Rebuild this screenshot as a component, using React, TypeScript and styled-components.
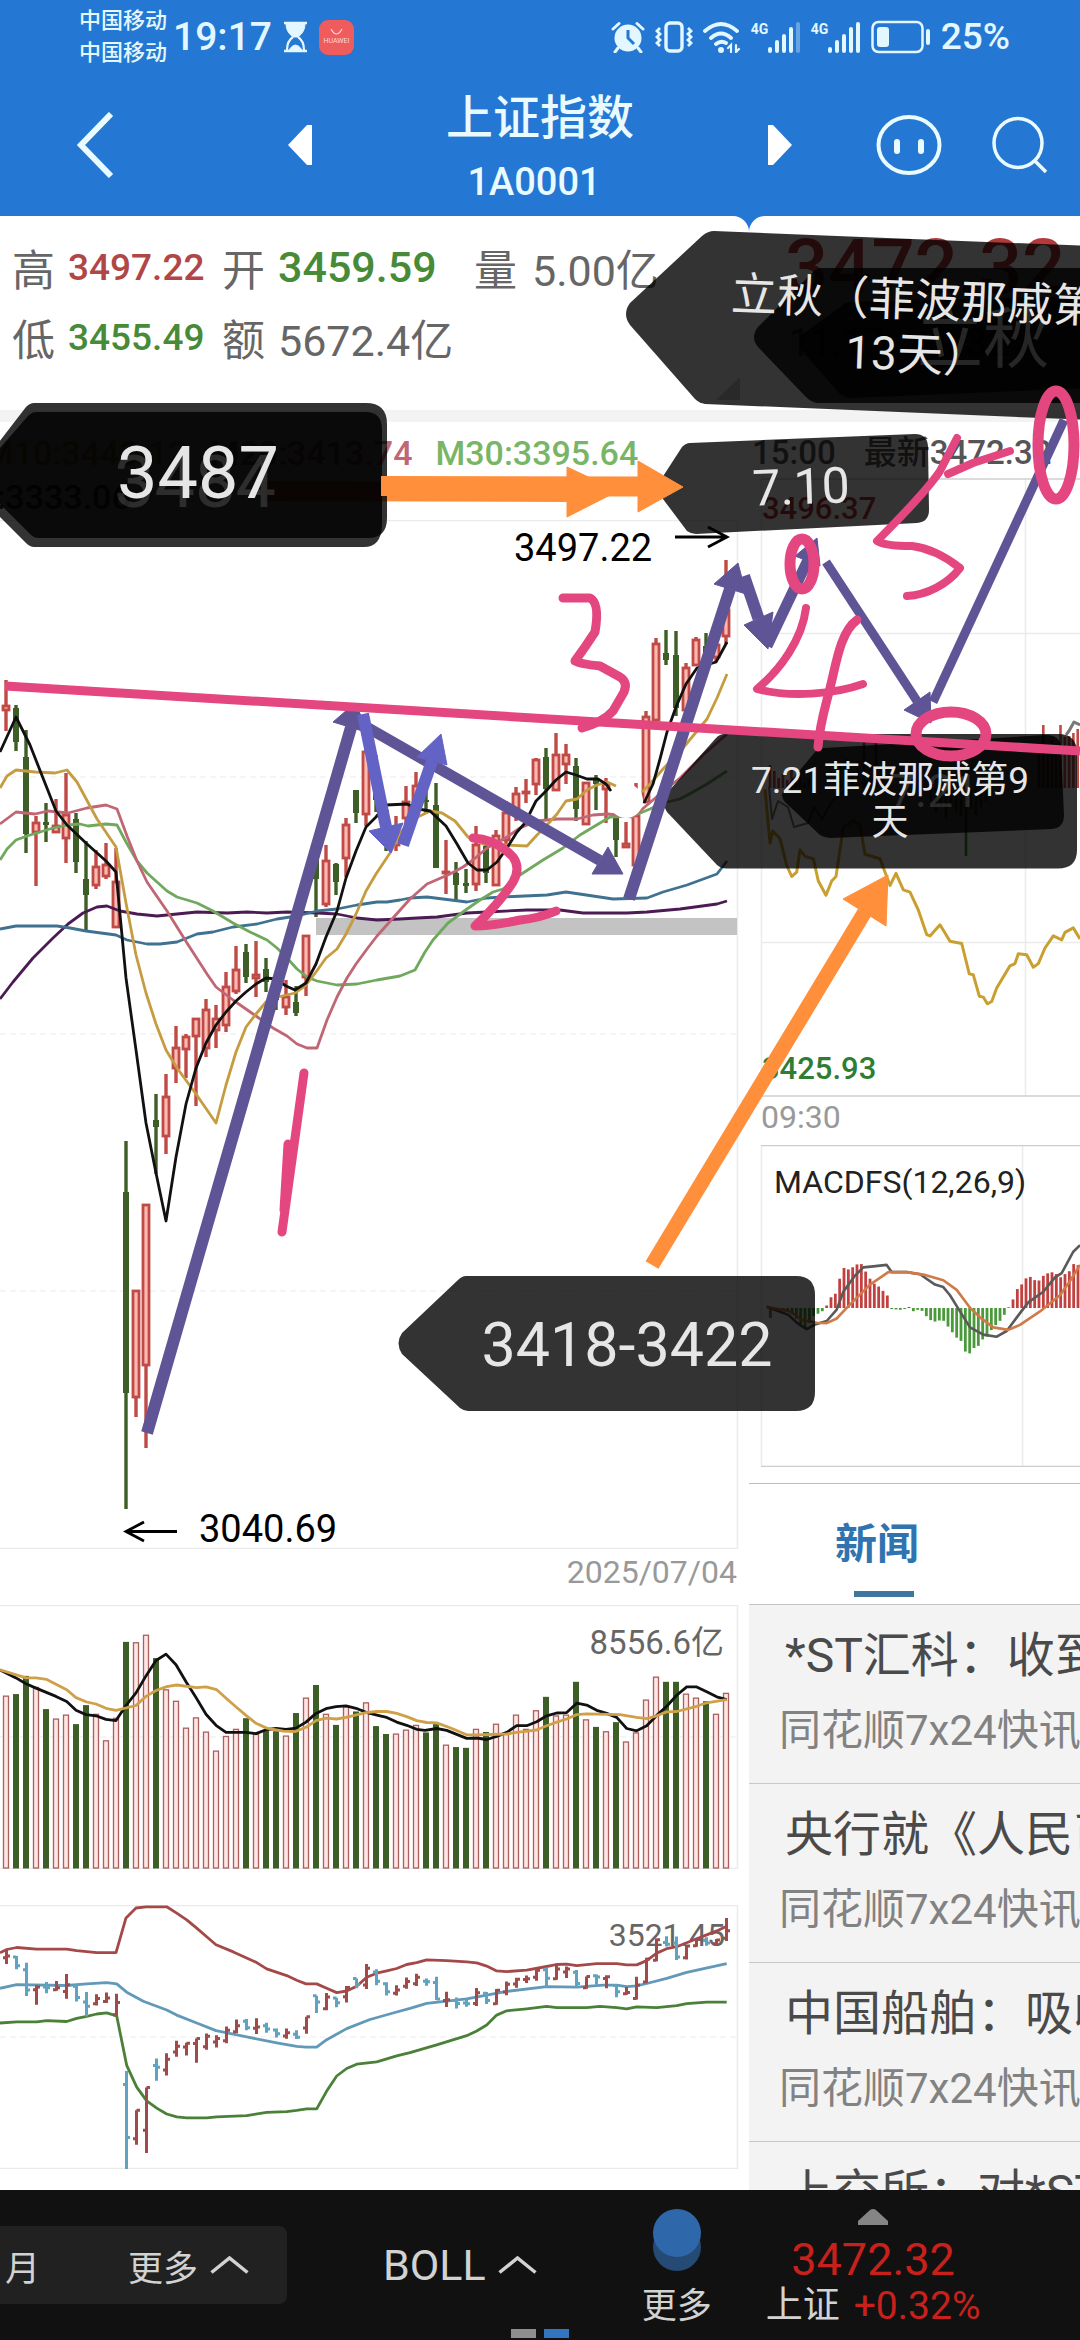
import React from 'react';
import styled, { createGlobalStyle } from 'styled-components';

const FONT = "Roboto, 'Noto Sans CJK SC', sans-serif";
const UP = '#bf4a46';
const DOWN = '#3d5e26';
const RULE = '#ebebeb';

const GlobalStyle = createGlobalStyle`
  *, *::before, *::after { box-sizing: border-box; }
  html, body { margin: 0; background: #fff; }
  body { font-family: ${FONT}; overflow: hidden; }
  button { border: 0; padding: 0; margin: 0; background: none; color: inherit; font: inherit; cursor: pointer; }
  svg { display: block; flex: none; }
`;

/* ---------- page frame ---------- */

const Page = styled.div`
  position: relative;
  display: flex;
  flex-direction: column;
  height: 100vh;
  overflow: hidden;
  background: #2577d4;
`;

const StatusBar = styled.div`
  display: flex;
  align-items: center;
  justify-content: space-between;
  height: 74px;
  padding: 0 70px 0 79px;
  color: #e2f7ff;
`;

const StatusGroup = styled.div<{ $gap: number }>`
  display: flex;
  align-items: center;
  gap: ${(p) => p.$gap}px;
`;

const Carriers = styled.div`
  font-size: 22px;
  line-height: 32px;
  font-weight: 500;
  white-space: nowrap;
`;

const StatusText = styled.span<{ $size: number }>`
  font-size: ${(p) => p.$size}px;
  line-height: 48px;
  font-weight: 500;
`;

const AppBadge = styled.span`
  display: flex;
  flex-direction: column;
  align-items: center;
  justify-content: center;
  width: 35px;
  height: 35px;
  border-radius: 9px;
  background: #ee5c5e;
  color: #ffd9d9;
  font-size: 7px;
  line-height: 10px;
`;

const Signal = styled.span`
  display: flex;
  align-items: flex-start;
  line-height: 16px;
  width: 50px;
  justify-content: space-between;
  b { font-size: 14px; font-weight: 700; }
`;

const Toolbar = styled.header`
  display: grid;
  grid-template-columns: minmax(0, 312fr) minmax(0, 456fr) minmax(0, 312fr);
  align-items: center;
  height: 142px;
  color: #e9fbff;
`;

const ToolbarStart = styled.div`
  display: flex;
  align-items: center;
  justify-content: space-between;
  padding-left: 76px;
`;

const ToolbarEnd = styled.div`
  display: flex;
  align-items: center;
  gap: 50px;
  padding-right: 32px;
  > :first-child { margin-right: auto; }
`;

const Heading = styled.div`
  padding-top: 8px;
  text-align: center;
`;

const Title = styled.h1`
  margin: 0;
  font-size: 47px;
  line-height: 66px;
  font-weight: 500;
`;

const Code = styled.div`
  padding-right: 12px;
  font-size: 38px;
  line-height: 62px;
  font-weight: 500;
`;

const Body = styled.main`
  flex: 1;
  min-height: 0;
  display: grid;
  grid-template-columns: minmax(0, 749fr) minmax(0, 331fr);
  overflow: hidden;
`;

const Panel = styled.section<{ $side: 'left' | 'right' }>`
  min-width: 0;
  overflow: hidden;
  background: #fff;
  border-radius: ${(p) => (p.$side === 'left' ? '0 16px 0 0' : '16px 0 0 0')};
`;

/* ---------- quote summary ---------- */

const Summary = styled.div`
  height: 194px;
  padding-top: 19px;
`;

const StatRow = styled.div`
  display: grid;
  grid-template-columns: 56px 154px 56px 196px 58px 1fr;
  align-items: center;
  padding: 0 0 6px 12px;
  height: 70px;
  color: #666;
  font-size: 43px;
  white-space: nowrap;
`;

const Figure = styled.span<{ $tone?: 'up' | 'down'; $small?: boolean }>`
  font-size: ${(p) => (p.$small ? 37 : 43)}px;
  font-weight: ${(p) => (p.$tone ? 500 : 400)};
  color: ${(p) => (p.$tone === 'up' ? '#b04646' : p.$tone === 'down' ? '#478a37' : '#666')};
`;

const Price = styled.div`
  padding-left: 36px;
  font-size: 76px;
  line-height: 64px;
  font-weight: 500;
  color: #b23a3a;
`;

const Change = styled.div`
  padding-left: 40px;
  font-size: 38px;
  line-height: 88px;
  color: #b23a3a;
  white-space: pre;
`;

const Band = styled.div`
  height: 12px;
  background: #f3f3f3;
`;

const Legend = styled.div`
  height: 98px;
  padding-top: 9px;
  font-size: 34px;
  line-height: 44px;
  font-weight: 500;
  white-space: nowrap;
`;

const LegendLine = styled.div<{ $scroll: number }>`
  display: flex;
  gap: 23px;
  margin-left: -${(p) => p.$scroll}px;
`;

const Tint = styled.span<{ $color: string }>`
  color: ${(p) => p.$color};
`;

const Chart = styled.svg`
  width: 100%;
  height: auto;
  text { font-family: ${FONT}; }
`;

const DateRow = styled.div`
  height: 56px;
  padding-right: 12px;
  text-align: right;
  font-size: 32px;
  line-height: 46px;
  color: #999;
`;

const Stack = styled.div`
  display: flex;
  flex-direction: column;
  gap: 36px;
`;

const LastRow = styled.div`
  display: flex;
  gap: 28px;
  height: 56px;
  padding-left: 3px;
  font-size: 33px;
  line-height: 62px;
  font-weight: 500;
  color: #555;
  white-space: nowrap;
`;

const TimeRow = styled.div`
  height: 48px;
  padding-left: 12px;
  font-size: 32px;
  line-height: 41px;
  color: #999;
`;

/* ---------- news ---------- */

const Tabs = styled.div`
  margin-top: 16px;
  height: 122px;
  padding: 31px 0 0 86px;
  border-top: 1px solid #bdbdbd;
  border-bottom: 1px solid #c4c4c4;
`;

const Tab = styled.button`
  display: flex;
  flex-direction: column;
  align-items: center;
  gap: 16px;
  width: 98px;
  font-size: 42px;
  line-height: 60px;
  font-weight: 700;
  color: #2f74b0;
  span { align-self: flex-start; }
  &::after { content: ''; width: 60px; height: 6px; background: #3f769f; }
`;

const News = styled.ul`
  margin: 0;
  padding: 0;
  list-style: none;
  background: #f3f3f3;
`;

const NewsItem = styled.li`
  height: 179px;
  padding: 16px 0 0 32px;
  border-bottom: 1px solid #c8c8c8;
  white-space: nowrap;
  overflow: hidden;
`;

const NewsLink = styled.a`
  display: block;
  padding-left: 4px;
  font-size: 48px;
  line-height: 70px;
  color: #4a4a4a;
  text-decoration: none;
`;

const Source = styled.div`
  margin-left: -2px;
  font-size: 42px;
  line-height: 80px;
  color: #828282;
`;

/* ---------- bottom bar ---------- */

const BottomBar = styled.footer`
  position: relative;
  display: flex;
  align-items: center;
  height: 150px;
  background: #111;
  color: #d2d2d2;
`;

const Periods = styled.div`
  display: flex;
  align-items: center;
  justify-content: space-between;
  width: 287px;
  height: 78px;
  padding: 0 38px 0 5px;
  border-radius: 0 8px 8px 0;
  background: #212121;
  font-size: 35px;
`;

const BarButton = styled.button<{ $size: number; $lead?: boolean }>`
  display: flex;
  align-items: center;
  gap: 12px;
  margin-left: ${(p) => (p.$lead ? 96 : 0)}px;
  font-size: ${(p) => p.$size}px;
`;

const More = styled.button`
  display: flex;
  flex-direction: column;
  align-items: center;
  align-self: stretch;
  gap: 11px;
  margin-left: 105px;
  padding-top: 18px;
  font-size: 35px;
  line-height: 48px;
`;

const Quote = styled.button`
  display: flex;
  flex-direction: column;
  align-items: center;
  align-self: stretch;
  margin-left: 54px;
  padding-top: 19px;
  font-size: 37px;
  line-height: 46px;
  color: #d2d2d2;
  white-space: nowrap;
`;

const QuotePrice = styled.span`
  margin-top: 12px;
  font-size: 45px;
  color: #c8211c;
`;

const QuoteLine = styled.span`
  display: flex;
  gap: 14px;
  span { color: #c8211c; font-size: 39px; }
`;

const Pager = styled.div`
  position: absolute;
  bottom: 2px;
  left: 50%;
  display: flex;
  gap: 8px;
  transform: translateX(-50%);
`;

const Dot = styled.span<{ $on?: boolean }>`
  width: 25px;
  height: 9px;
  background: ${(p) => (p.$on ? '#3274c0' : '#8e8e8e')};
`;

/* ---------- markup drawn over the page ---------- */

const Markup = styled.svg`
  position: absolute;
  top: 0;
  left: 0;
  width: 100%;
  height: auto;
  pointer-events: none;
  text { font-family: ${FONT}; fill: #e6e6e6; text-anchor: middle; }
`;

/* ---------- data ---------- */

type Pt = [number, number];

const pts = (s: string): Pt[] => s.trim().split(/\s+/).map((p) => p.split(',').map(Number) as Pt);

const poly = (s: string, ox = 0, oy = 0, kx = 1, ky = 1) =>
  pts(s).map(([x, y]) => `${(ox + x * kx).toFixed(1)},${(oy + y * ky).toFixed(1)}`).join(' ');

// high, body top, body bottom, low, rising
const CANDLES: [number, number, number, number, number][] = [
  [680, 705, 711, 731, 1], [705, 708, 742, 751, 0], [730, 757, 834, 853, 0], [816, 822, 833, 886, 1],
  [803, 822, 825, 842, 0], [799, 825, 833, 833, 1], [773, 814, 839, 863, 1], [813, 819, 862, 873, 0],
  [841, 879, 895, 930, 0], [850, 866, 886, 889, 1], [843, 864, 877, 879, 1], [848, 881, 928, 928, 1],
  [1141, 1192, 1393, 1509, 0], [1290, 1290, 1398, 1417, 1], [1204, 1204, 1366, 1448, 1], [1094, 1120, 1127, 1174, 0],
  [1074, 1096, 1137, 1154, 1], [1026, 1047, 1069, 1083, 1], [1034, 1036, 1050, 1078, 1], [1018, 1018, 1037, 1106, 1],
  [999, 1009, 1049, 1057, 1], [1005, 1018, 1031, 1048, 1], [972, 986, 1026, 1032, 1], [946, 969, 992, 994, 1],
  [944, 952, 977, 983, 0], [941, 974, 979, 997, 1], [958, 969, 982, 992, 0], [980, 985, 1000, 1010, 0],
  [980, 996, 1008, 1015, 1], [986, 1002, 1013, 1016, 0], [935, 935, 978, 996, 1], [855, 855, 879, 917, 0],
  [845, 860, 905, 907, 1], [863, 864, 882, 895, 0], [818, 824, 859, 877, 1], [790, 790, 813, 823, 0],
  [735, 751, 815, 826, 1], [755, 765, 800, 812, 0], [804, 810, 840, 851, 0], [816, 834, 846, 851, 1],
  [786, 801, 819, 825, 1], [772, 785, 810, 815, 1], [790, 800, 802, 814, 0], [783, 805, 868, 868, 0],
  [840, 871, 873, 894, 1], [862, 873, 885, 900, 0], [869, 883, 886, 893, 0], [826, 844, 885, 891, 1],
  [841, 846, 873, 883, 0], [830, 835, 886, 886, 1], [801, 812, 841, 850, 1], [787, 793, 811, 821, 1],
  [779, 791, 794, 803, 1], [758, 759, 785, 795, 1], [748, 757, 789, 819, 0], [733, 754, 791, 791, 1],
  [744, 754, 765, 784, 1], [758, 766, 809, 821, 0], [782, 782, 825, 825, 1], [775, 780, 784, 810, 0],
  [778, 783, 790, 823, 1], [817, 817, 840, 857, 0], [822, 843, 848, 848, 1], [783, 815, 866, 866, 1],
  [711, 716, 803, 803, 1], [638, 643, 721, 721, 1], [630, 653, 660, 665, 0], [631, 655, 708, 716, 0],
  [663, 667, 711, 714, 1], [637, 639, 666, 666, 1], [633, 646, 655, 662, 0], [640, 644, 658, 662, 1],
  [560, 609, 637, 644, 1],
];

// top of each volume column, measured on the 732-unit pane; green sessions carry a minus sign
const VOLUMES = [
  295, -291, -245, 273, -329, 353, 343, -367, -319, 341, 408, 351, -159, 160, 141, -200, 279, 308, 376, 350, 386,
  434, 397, 379, -352, 392, -383, -385, 396, -339, 300, -268, 341, -369, 322, -335, 312, -372, -392, 391, 381, 369,
  -388, -367, 419, -425, -427, 379, -387, 366, 388, 343, 379, 332, -298, 345, 343, -260, 355, -374, 385, -362, 411,
  388, 305, 247, -260, -260, 290, 300, -309, 341, 288,
];

const MACD = [
  -28, -6, -6, -6, -8, -18, -30, -48, -55, -42, -22, -16, -9, 7, 30, 40, 82, 112, 108, 114, 122, 123, 102, 82, 68, 60,
  48, 35, -3, -4, -5, -3, 3, -9, -5, -8, -23, -34, -38, -35, -36, -52, -68, -83, -92, -122, -127, -112, -106, -88, -80,
  -62, -48, -36, -19, 2, 24, 53, 66, 83, 87, 78, 77, 90, 97, 100, 95, 86, 95, 103, 123, 120,
];

const AVERAGES: [string, string][] = [
  ['#4c1b54', '0,999 13,982 33,958 53,938 68,924 83,913 97,907 107,906 120,911 137,914 157,916 177,914 197,912 227,913 247,912 267,913 287,912 317,913 337,914 357,918 377,920 400,919 417,918 437,917 467,913 487,912 527,910 560,910 583,913 627,913 647,912 680,909 717,904 727,901'],
  ['#3f7191', '0,929 16,926 57,926 70,928 86,931 116,935 127,940 147,944 160,944 177,942 197,934 213,932 233,927 257,924 277,919 297,916 317,911 337,909 357,905 377,902 387,902 400,900 410,898 427,897 467,902 487,898 503,897 547,895 566,892 593,896 613,899 647,898 663,892 687,885 717,874 727,861'],
  ['#70a85e', '0,860 7,849 16,840 27,836 40,832 53,828 68,825 80,824 88,826 106,824 117,825 126,842 137,861 147,873 167,891 177,897 197,903 213,911 233,923 250,932 267,940 277,948 287,958 297,969 307,977 317,981 327,983 337,985 357,984 377,980 400,976 415,970 425,952 433,940 448,923 467,909 480,900 493,892 503,889 520,875 543,860 563,848 580,835 600,823 610,817 633,816 650,809 663,803 680,799 693,792 707,784 727,771'],
  ['#c06674', '0,824 16,812 25,813 35,814 48,811 68,813 87,808 106,805 117,809 127,836 137,861 147,882 167,911 187,943 207,974 216,987 233,1000 256,1016 273,1028 287,1036 297,1044 307,1048 317,1048 327,1020 337,997 347,978 356,964 367,949 377,936 393,918 410,899 427,884 450,874 463,867 473,860 487,848 507,837 520,828 537,821 557,819 577,819 593,815 608,814 633,817 660,794 680,778 703,755 727,734'],
  ['#c69c40', '0,788 7,776 16,770 35,772 55,773 67,770 77,782 97,819 116,847 126,903 136,955 146,993 156,1024 166,1050 177,1068 196,1094 216,1123 226,1085 236,1052 246,1027 256,1014 266,1002 278,997 295,993 306,985 316,972 326,958 337,949 346,934 356,914 366,891 376,874 390,853 400,833 413,819 422,815 430,811 442,813 455,821 468,837 483,844 527,846 537,835 547,825 557,814 566,801 577,799 587,790 597,785 607,782 616,786'],
  ['#c69c40', '642,792 650,784 663,769 683,748 707,719 717,698 727,674'],
  ['#111', '0,752 16,717 30,745 43,778 56,811 67,825 87,844 106,861 116,872 126,978 136,1050 146,1123 156,1173 166,1221 176,1157 186,1104 196,1068 206,1043 216,1025 226,1012 236,1001 246,992 256,984 266,978 276,979 286,986 295,990 306,983 316,964 326,937 337,911 346,878 356,851 366,827 376,817 386,805 407,804 418,809 430,811 446,826 457,844 468,863 477,870 487,870 497,862 507,848 517,832 525,823 536,801 546,791 556,780 566,772 576,775 587,779 598,779 606,784 611,791'],
  ['#111', '644,803 653,784 660,759 667,732 676,707 686,684 697,668 716,662 720,655 727,642'],
];

const VOL_BLACK = '0,230 48,250 78,265 108,276 168,297 200,310 228,332 258,343 288,346 318,355 348,358 378,320 408,288 438,245 468,206 498,190 528,217 558,260 588,300 618,342 648,370 678,388 738,388 768,391 798,381 828,378 858,380 888,377 918,362 948,340 978,328 1008,323 1038,321 1068,327 1098,337 1140,346 1160,350 1190,362 1220,370 1250,380 1275,383 1310,378 1340,383 1370,393 1400,403 1430,402 1460,406 1490,398 1520,388 1550,371 1580,371 1610,361 1640,346 1670,339 1700,338 1730,314 1760,319 1790,332 1820,340 1850,350 1880,378 1910,384 1940,371 1970,345 2000,322 2030,294 2060,273 2090,273 2120,285 2150,298 2180,305';
const VOL_GOLD = '0,230 78,250 108,250 140,254 200,280 228,300 260,311 288,316 318,327 348,332 408,320 438,297 468,282 500,272 530,268 590,275 618,273 650,280 680,303 710,325 738,345 768,365 800,377 850,385 885,386 918,375 948,358 978,352 1010,354 1038,350 1098,338 1130,335 1160,335 1190,340 1220,348 1250,358 1280,363 1310,364 1350,376 1400,394 1430,394 1520,392 1550,388 1610,382 1640,371 1670,362 1700,354 1730,343 1760,341 1860,343 1910,350 1940,353 1970,346 2000,336 2030,335 2090,322 2120,313 2180,305';

const BOLL: [string, string][] = [
  ['#6299b8', '0,1035 50,1026 200,1028 260,1024 320,1021 350,1024 380,1045 430,1068 500,1090 530,1103 590,1123 648,1142 740,1158 830,1173 890,1182 918,1184 950,1184 980,1165 1040,1137 1110,1114 1190,1095 1230,1086 1280,1073 1400,1062 1520,1043 1640,1031 1730,1032 1810,1027 1850,1027 1880,1031 1910,1029 1940,1023 2000,1010 2060,995 2180,973'],
  ['#4b8038', '0,1123 50,1120 110,1120 140,1117 200,1119 230,1111 260,1106 290,1100 320,1097 350,1105 380,1230 410,1285 440,1320 470,1338 500,1353 530,1360 560,1363 620,1363 650,1360 740,1357 800,1349 860,1347 890,1344 920,1340 950,1340 980,1295 1010,1257 1040,1238 1070,1227 1130,1221 1190,1206 1230,1198 1310,1178 1400,1155 1430,1143 1460,1128 1490,1103 1520,1092 1580,1087 1640,1081 1670,1084 1760,1084 1800,1081 1850,1084 1880,1087 1910,1082 1970,1084 2030,1079 2060,1074 2120,1070 2180,1070'],
  ['#a44848', '0,945 20,937 50,932 110,936 200,936 230,940 290,945 348,945 378,857 408,832 438,829 500,829 530,845 560,862 590,883 620,905 648,925 700,943 770,970 800,986 860,1003 890,1015 918,1024 950,1024 980,1035 1010,1046 1040,1042 1070,1030 1100,1007 1130,997 1160,991 1190,985 1220,975 1250,970 1280,963 1340,965 1400,968 1430,971 1460,979 1490,991 1520,993 1580,989 1640,980 1670,975 1700,974 1730,978 1790,973 1850,973 1880,976 1910,976 1940,965 1970,946 2000,935 2030,930 2060,920 2090,910 2120,900 2150,890 2180,878'],
];

const INTRADAY = '195,915 210,1035 218,1008 240,1025 260,1085 275,1110 290,1100 300,1050 315,1065 340,1070 355,1120 378,1152 395,1120 408,1110 430,1000 460,985 480,995 495,1060 540,1070 570,1130 588,1103 610,1140 630,1145 655,1185 680,1240 690,1243 720,1218 750,1255 785,1260 808,1328 820,1330 838,1378 850,1380 862,1395 875,1390 890,1360 930,1310 945,1305 955,1283 980,1285 1000,1313 1015,1305 1035,1270 1060,1243 1085,1252 1095,1235 1120,1225 1140,1250';
const DIF = '80,632 145,655 175,680 200,695 225,682 260,672 290,640 310,590 345,545 370,522 400,519 440,515 455,535 500,535 540,541 585,570 610,577 630,600 660,645 690,690 730,710 770,716 800,700 840,650 865,620 910,590 945,550 965,538 1000,478 1020,460';
const DEA = '80,632 150,645 190,670 230,677 260,678 290,665 320,635 390,570 445,535 500,535 550,542 610,558 650,585 690,635 720,662 760,690 805,697 840,683 900,645 960,600 990,560 1020,515';

const NEWS = ['*ST汇科：收到', '央行就《人民币', '中国船舶：吸收', '上交所：对*ST'];

/* ---------- charts ---------- */

const Line = ({ points, color, width = 2 }: { points: string; color: string; width?: number }) => (
  <polyline points={points} fill="none" stroke={color} strokeWidth={width} strokeLinejoin="round" />
);

const Frame = ({ y, h, dashes }: { y: number; h: number; dashes: number[] }) => (
  <g stroke={RULE} fill="none">
    <path d={`M0 ${y + 0.5}H737.5V${y + h - 0.5}H0`} strokeWidth="1.5" />
    {dashes.map((d) => <path key={d} d={`M0 ${d}H737`} strokeDasharray="6 4" />)}
  </g>
);

const CandleChart = () => (
  <Chart viewBox="0 520 749 1029" role="img" aria-label="日K线">
    <Frame y={520} h={1029} dashes={[777, 1034, 1291]} />
    <rect x="316" y="918" width="421" height="17" fill="#c3c3c3" />
    {CANDLES.map(([hi, top, bot, lo, rising], k) => {
      const x = 6 + k * 10;
      const c = rising ? UP : DOWN;
      return (
        <g key={k}>
          <path d={`M${x} ${hi}V${top}M${x} ${bot}V${lo}`} stroke={c} strokeWidth="3.4" />
          {rising
            ? <rect x={x - 3} y={top + 1} width="6" height={Math.max(bot - top - 2, 1)} fill="#ffb9b1" stroke={c} strokeWidth="2.8" />
            : <rect x={x - 3} y={top} width="6" height={bot - top} fill={c} />}
        </g>
      );
    })}
    {AVERAGES.map(([c, p], i) => <Line key={i} points={p} color={c} width={2.8} />)}
    <circle cx="626" cy="801" r="17" fill="#fff" />
    <g fill="none" stroke="#000" strokeWidth="2.8">
      <path d="M675 537H726M708 527L727 537L708 547" />
      <path d="M177 1531.500H127M144 1522L126 1531.500L144 1541" />
    </g>
    <text x="514" y="561" fontSize="38">3497.22</text>
    <text x="199" y="1542" fontSize="38">3040.69</text>
  </Chart>
);

const VolumeChart = () => (
  <Chart viewBox="0 1606 749 264" role="img" aria-label="成交量">
    <Frame y={1606} h={264} dashes={[1738]} />
    {VOLUMES.map((v, k) => {
      const x = 6 + k * 10;
      const y = 1580 + Math.abs(v) / 2.529;
      return v < 0
        ? <rect key={k} x={x - 3} y={y} width="6" height={1869.5 - y} fill={DOWN} />
        : <rect key={k} x={x - 2.5} y={y + 0.5} width="5" height={1868.5 - y} fill="#fde6e4" stroke="#a9605e" strokeWidth="1.3" />;
    })}
    <Line points={poly(VOL_BLACK, 0, 1580, 1 / 3, 1 / 2.529)} color="#111" width={2.8} />
    <Line points={poly(VOL_GOLD, 0, 1580, 1 / 3, 1 / 2.529)} color="#d0a048" width={2.8} />
    <text x="724" y="1655" fontSize="33" fill="#666" textAnchor="end">8556.6亿</text>
  </Chart>
);

const BollChart = () => {
  const map = (y: number) => 1918.9 + (y - 560) * 0.2635;
  return (
    <Chart viewBox="0 1906 749 264" role="img" aria-label="BOLL">
      <Frame y={1906} h={264} dashes={[2038]} />
      <text x="725" y="1947" fontSize="32" fill="#666" textAnchor="end">3521.45</text>
      {BOLL.map(([c, p]) => <Line key={c} points={poly(p, 0, 1580, 1 / 3, 1 / 2.529)} color={c} width={2.8} />)}
      {CANDLES.map(([hi, top, bot, lo, rising], k) => {
        const x = 6.5 + k * 10;
        const open = map(rising ? bot : top);
        const close = map(rising ? top : bot);
        return (
          <path
            key={k}
            d={`M${x} ${map(hi)}V${map(lo) + 1}M${x - 3.5} ${open}H${x}M${x} ${close}H${x + 3.5}`}
            stroke={rising ? '#a04a4a' : '#5fa3c0'}
            strokeWidth="3"
          />
        );
      })}
    </Chart>
  );
};

const IntradayChart = () => (
  <Chart viewBox="749 477 331 619" role="img" aria-label="分时走势">
    <g fill="none" stroke={RULE} strokeWidth="1.5">
      <path d="M761.500 478V1095M1025.500 478V1095M761.500 632.500H1080M761.500 941.500H1080" />
      <path d="M761 478H1080M761 1095H1080" stroke="#cfcfcf" />
    </g>
    <g stroke={UP} strokeWidth="2.6">
      {[764, 770, 777, 773, 779, 768, 780, 776, 782, 778].map((y, i) => <path key={i} d={`M${770 + i * 4.3} ${y}V787`} />)}
      {[765, 758, 771, 760, 740, 768, 735, 766].map((y, i) => <path key={i} d={`M${840 + i * 6} ${y}V787`} />)}
      {[750, 724, 746, 739, 752, 724, 736, 735, 732, 728].map((y, i) => <path key={i} d={`M${1039 + i * 4.3} ${y}V787`} />)}
    </g>
    <g stroke="#3f8f34" strokeWidth="2.6">
      {[800, 812, 806, 818, 804, 810, 815, 855, 808, 814, 806, 800].map((y, i) => <path key={i} d={`M${931 + i * 5} 787V${y}`} />)}
    </g>
    <Line points="769,786 772,818 778,800 788,806 794,826 808,822 814,806 822,818 832,800 850,786 880,776" color="#777" />
    <Line points="1066,734 1069,730 1074,721 1080,724" color="#777" width={3} />
    <Line points={poly(INTRADAY, 700, 380, 1 / 3, 1 / 2.24)} color="#c9a030" width={3} />
    <text x="762" y="518" fontSize="31" fontWeight="500" fill="#b23a3a">3496.37</text>
    <text x="762" y="1078" fontSize="31" fontWeight="500" fill="#2f7d32">3425.93</text>
  </Chart>
);

const MacdChart = () => (
  <Chart viewBox="749 1144 331 322" role="img" aria-label="MACD">
    <path d="M761.500 1144V1465M1022.500 1144V1465" stroke={RULE} strokeWidth="1.5" />
    <path d="M761 1144.500H1080M761 1465.500H1080" stroke="#cdcdcd" strokeWidth="1.5" />
    {MACD.map((v, i) => {
      const x = 740 + (91 + i * 13) / 3;
      return <path key={i} d={`M${x} 1307V${1307 - v / 2.8}`} stroke={v > 0 ? '#c0413f' : '#4a9a3c'} strokeWidth="2.8" />;
    })}
    <Line points={poly(DIF, 740, 1080, 1 / 3, 1 / 2.8)} color="#5a5a5a" width={2.6} />
    <Line points={poly(DEA, 740, 1080, 1 / 3, 1 / 2.8)} color="#d07a48" width={2.6} />
    <text x="774" y="1192" fontSize="32" fill="#222">MACDFS(12,26,9)</text>
  </Chart>
);

/* ---------- annotations ---------- */

// straight arrow: shaft of the given width and a triangular head
const Arrow = ({ from, to, head, w, color }: { from: Pt; to: Pt; head?: [Pt, Pt]; w: number; color: string }) => {
  const mid: Pt = head ? [(head[0][0] + head[1][0]) / 2, (head[0][1] + head[1][1]) / 2] : to;
  return (
    <g>
      <path d={`M${from}L${mid}`} stroke={color} strokeWidth={w} />
      {head && <path d={`M${to}L${head[0]}L${head[1]}Z`} fill={color} stroke={color} strokeWidth="1" />}
    </g>
  );
};

const V = '#5f5496';
const B = '#6363c6';
const O = '#ff8f3b';
const P = '#e4477f';

const Annotations = () => (
  <Markup viewBox="0 0 1080 2340">
    <path d="M716 400H740V377Z" fill="#ccc" />
    <Arrow from={[265, 491]} to={[618, 491]} head={[[567, 467], [567, 517]]} w={20} color={O} />

    <g fill="#000" fillOpacity="0.8">
      <path d="M34 403H366Q387 403 387 424V518Q387 538 368 538H38Q34 538 30 534L-18 486Q-28 475 -18 464L26 407Q30 403 34 403Z" />
      <path d="M36 412H366Q382 412 382 430V526Q381 547 364 547H34Q30 547 26 543L-22 495Q-32 484 -22 473L28 416Q32 412 36 412Z" />
      <path d="M714 231L1090 246V420L705 404Q699 403 695 399L630 325Q622 314 630 303L702 236Q708 231 714 231Z" />
      <path d="M822 268H1090V403H817Q811 402 806 397L758 347Q750 337 758 327L812 273Q817 268 822 268Z" />
      <path d="M850 302L1090 296V388L850 398Q845 398 840 394L803 352Q797 343 803 334L840 307Q845 302 850 302Z" />
      <path d="M690 443L915 434Q927 434 928 446L929 510Q929 522 917 523L696 534Q691 534 687 531L660 495Q655 488 660 481L682 447Q686 443 690 443Z" />
      <path d="M724 734H1058Q1077 734 1077 753V850Q1077 868.500 1058 868.500H726Q721 868.500 717 865L667 812Q660 802 667 793L716 738Q720 734 724 734Z" />
      <path d="M824 748L1046 735Q1060 735 1061 747L1064 815Q1064 828 1052 829L830 838Q825 838 820 835L785 802Q779 795 785 788L815 752Q819 748 824 748Z" />
      <path d="M466 1276H796Q815 1276 815 1295V1392Q815 1411 796 1411H468Q464 1411 460 1408L402 1354Q395 1343 402 1333L458 1280Q462 1276 466 1276Z" />
    </g>

    <text x="195" y="507" fontSize="72" fillOpacity="0.16">3484</text>
    <text x="198" y="498" fontSize="72">3487</text>
    <text x="983" y="362" fontSize="66" fillOpacity="0.16">立秋</text>
    <g transform="rotate(2 906 300)">
      <text x="731" y="316" fontSize="46" style={{ textAnchor: 'start' }}>立秋（菲波那戚第</text>
      <text x="919" y="370" fontSize="46">13天）</text>
    </g>
    <text x="801" y="504" fontSize="50" transform="rotate(-2 801 486)">7.10</text>
    <text x="934" y="807" fontSize="46" fillOpacity="0.16">7.21</text>
    <text x="890" y="793" fontSize="37">7.21菲波那戚第9</text>
    <text x="890" y="835" fontSize="37">天</text>
    <text x="627" y="1366" fontSize="61">3418-3422</text>

    <Arrow from={[381, 486]} to={[683, 487]} head={[[638, 461], [638, 512]]} w={20} color={O} />
    <Arrow from={[652, 1265]} to={[888, 875]} head={[[843, 899], [886, 926]]} w={15} color={O} />

    <Arrow from={[147, 1433]} to={[355, 703]} head={[[333, 722], [369, 733]]} w={12} color={V} />
    <Arrow from={[356, 721]} to={[623, 874]} head={[[608, 847], [592, 874]]} w={11} color={V} />
    <Arrow from={[629, 899]} to={[738, 563]} head={[[714, 584], [746, 594]]} w={12} color={V} />
    <Arrow from={[744, 576]} to={[768, 649]} head={[[744, 625], [773, 612]]} w={12} color={V} />
    <Arrow from={[767, 646]} to={[817, 538]} head={[[795, 556], [820, 566]]} w={11} color={V} />
    <Arrow from={[826, 562]} to={[931, 723]} head={[[904, 710], [930, 692]]} w={9} color={V} />
    <Arrow from={[933, 702]} to={[1064, 420]} w={9} color={V} />
    <Arrow from={[363, 714]} to={[391, 853]} head={[[369, 831], [403, 823]]} w={12} color={B} />
    <Arrow from={[403, 845]} to={[441, 734]} head={[[417, 757], [447, 765]]} w={12} color={B} />

    <g fill="none" stroke={P} strokeWidth="9" strokeLinecap="round" strokeLinejoin="round">
      <path d="M5 686L1080 751" strokeLinecap="butt" />
      <path d="M304 1073L282 1232M288 1144L284 1210" />
      <path d="M563 598H590Q600 603 595 632Q586 646 575 661Q580 664 600 666L620 677Q628 682 624 692L613 711Q603 722 582 728" />
      <path d="M473 838Q496 839 513 857Q521 868 513 882Q498 905 475 926Q492 926 520 920Q540 918 556 911" />
      <path d="M806 608C802 640 780 670 757 689C790 698 835 694 863 684" strokeWidth="8" />
      <path d="M857 620C840 632 836 665 830 688C826 705 820 722 818 747" />
      <path d="M957 438L940 471Q926 492 877 541Q884 546 912 546Q936 549 960 568C948 584 927 595 907 596" strokeWidth="8" />
      <path d="M948 474L973 463L1010 451" strokeWidth="8" />
      <g strokeWidth="11">
        <ellipse cx="802" cy="564" rx="12" ry="25" />
        <ellipse cx="1056" cy="445" rx="18" ry="54" />
        <ellipse cx="951" cy="734" rx="35" ry="22" />
      </g>
    </g>
  </Markup>
);

/* ---------- icons ---------- */

const SignalBars = ({ weak }: { weak?: boolean }) => (
  <svg width="33" height="32" viewBox="0 0 33 32" stroke="currentColor" strokeWidth="4" strokeLinecap="round">
    <path d="M2 28V30M9 21V30M16 15V30M23 8V30" />
    <path d="M30 3V30" opacity={weak ? 0.35 : 1} />
  </svg>
);

const Chevron = () => (
  <svg width="39" height="18" viewBox="0 0 39 18" fill="none" stroke="currentColor" strokeWidth="3.500">
    <path d="M1.500 16.500L19.500 2L37.500 16.500" />
  </svg>
);

const StatusIcons = () => (
  <>
    <svg width="34" height="32" viewBox="0 0 34 32">
      <circle cx="17" cy="17" r="13.500" fill="currentColor" />
      <path d="M2 8L8 2.500M32 8L26 2.500M7 27L4 31M27 27L30 31" stroke="currentColor" strokeWidth="3" strokeLinecap="round" />
      <path d="M17 9V17L23 23" fill="none" stroke="#2577d4" strokeWidth="3" />
    </svg>
    <svg width="38" height="32" viewBox="0 0 38 32" fill="none" stroke="currentColor">
      <rect x="11" y="2" width="16" height="28" rx="4" strokeWidth="3.400" />
      <path d="M5 7L2 10L5 13L2 16L5 19L2 22L5 25M33 7L36 10L33 13L36 16L33 19L36 22L33 25" strokeWidth="2.800" />
    </svg>
    <svg width="38" height="32" viewBox="0 0 38 32" fill="none" stroke="currentColor" strokeWidth="3.800" strokeLinecap="round">
      <path d="M2 10Q18 -4 34 10M8 17Q18 8 28 17M13 23Q18 19 23 22" />
      <circle cx="18" cy="29" r="2" fill="currentColor" strokeWidth="2" />
      <path d="M28 31V24L25 27M33 24V31L36 28" strokeWidth="2.200" />
    </svg>
    <Signal><b>4G</b><SignalBars weak /></Signal>
    <Signal><b>4G</b><SignalBars /></Signal>
    <svg width="60" height="34" viewBox="0 0 60 34">
      <rect x="1.500" y="2" width="50" height="30" rx="6" fill="none" stroke="currentColor" strokeWidth="2.500" />
      <rect x="6" y="7" width="12" height="20" rx="3" fill="currentColor" />
      <rect x="55" y="9" width="4" height="16" rx="2" fill="currentColor" />
    </svg>
  </>
);

export default function App() {
  return (
    <Page>
      <GlobalStyle />
      <StatusBar>
        <StatusGroup $gap={6}>
          <Carriers>中国移动<br />中国移动</Carriers>
          <StatusGroup $gap={12}>
            <StatusText $size={39}>19:17</StatusText>
            <svg width="23" height="32" viewBox="0 0 23 32" fill="none" stroke="currentColor">
              <path d="M0 2H23M0 30H23" strokeWidth="2.500" />
              <path d="M2 3H21Q21 11 14 16H9Q2 11 2 3Z" fill="currentColor" />
              <path d="M9 16Q3 20 3 29M14 16Q20 20 20 29" strokeWidth="2.200" />
              <path d="M5 29Q11.500 19 18 29Z" fill="currentColor" />
            </svg>
            <AppBadge>
              <svg width="13" height="8" viewBox="0 0 13 8" fill="none" stroke="currentColor" strokeWidth="1.200"><path d="M1 1Q6.500 11 12 1" /></svg>
              HUAWEI
            </AppBadge>
          </StatusGroup>
        </StatusGroup>
        <StatusGroup $gap={10}>
          <StatusIcons />
          <StatusText $size={37}>25%</StatusText>
        </StatusGroup>
      </StatusBar>

      <Toolbar>
        <ToolbarStart>
          <button aria-label="返回">
            <svg width="38" height="66" viewBox="0 0 38 66" fill="none" stroke="currentColor" strokeWidth="6"><path d="M35 2L5 33L35 64" /></svg>
          </button>
          <button aria-label="上一只">
            <svg width="24" height="40" viewBox="0 0 24 40"><path d="M24 0V40H19L0 20L19 0Z" fill="#fff" /></svg>
          </button>
        </ToolbarStart>
        <Heading>
          <Title>上证指数</Title>
          <Code>1A0001</Code>
        </Heading>
        <ToolbarEnd>
          <button aria-label="下一只">
            <svg width="24" height="40" viewBox="0 0 24 40"><path d="M0 0V40H5L24 20L5 0Z" fill="#fff" /></svg>
          </button>
          <button aria-label="助手">
            <svg width="66" height="60" viewBox="0 0 66 60" fill="none" stroke="currentColor" strokeLinecap="round">
              <ellipse cx="33" cy="30" rx="30.500" ry="28" strokeWidth="4" />
              <path d="M21 27V36M45 27V36" strokeWidth="6" />
            </svg>
          </button>
          <button aria-label="搜索">
            <svg width="56" height="58" viewBox="0 0 56 58" fill="none" stroke="currentColor" strokeWidth="3.500">
              <ellipse cx="26" cy="27" rx="24" ry="24.500" />
              <path d="M42 44L54 56" />
            </svg>
          </button>
        </ToolbarEnd>
      </Toolbar>

      <Body>
        <Panel $side="left">
          <Summary>
            <StatRow>
              <span>高</span><Figure $tone="up" $small>3497.22</Figure>
              <span>开</span><Figure $tone="down">3459.59</Figure>
              <span>量</span><Figure>5.00亿</Figure>
            </StatRow>
            <StatRow>
              <span>低</span><Figure $tone="down" $small>3455.49</Figure>
              <span>额</span><Figure>5672.4亿</Figure>
            </StatRow>
          </Summary>
          <Band />
          <Legend>
            <LegendLine $scroll={16}>
              <Tint $color="#c69c40">M10:3443.12</Tint>
              <Tint $color="#c06674">M20:3413.74</Tint>
              <Tint $color="#79b566">M30:3395.64</Tint>
            </LegendLine>
            <LegendLine $scroll={72}>
              <Tint $color="#333">M60:3333.06</Tint>
            </LegendLine>
          </Legend>
          <CandleChart />
          <DateRow>2025/07/04</DateRow>
          <Stack>
            <VolumeChart />
            <BollChart />
          </Stack>
        </Panel>

        <Panel $side="right">
          <Summary>
            <Price>3472.32</Price>
            <Change>11.17   +0.32%</Change>
          </Summary>
          <Band />
          <LastRow><span>15:00</span><span>最新3472.32</span></LastRow>
          <IntradayChart />
          <TimeRow>09:30</TimeRow>
          <MacdChart />
          <Tabs><Tab><span>新闻</span></Tab></Tabs>
          <News>
            {NEWS.map((t) => (
              <NewsItem key={t}>
                <NewsLink href="#">{t}</NewsLink>
                <Source>同花顺7x24快讯</Source>
              </NewsItem>
            ))}
          </News>
        </Panel>
      </Body>

      <BottomBar>
        <Periods>
          <BarButton $size={35}>月</BarButton>
          <BarButton $size={35}>更多 <Chevron /></BarButton>
        </Periods>
        <BarButton $size={43} $lead>BOLL <Chevron /></BarButton>
        <More>
          <svg width="50" height="64" viewBox="0 0 50 64">
            <ellipse cx="25" cy="39" rx="24" ry="24" fill="#254b74" />
            <ellipse cx="25" cy="25" rx="24" ry="24" fill="#2f67ab" />
          </svg>
          更多
        </More>
        <Quote>
          <svg width="30" height="16" viewBox="0 0 30 16"><path d="M12 1Q15 -1 18 1L30 12V16H0V12Z" fill="#858585" /></svg>
          <QuotePrice>3472.32</QuotePrice>
          <QuoteLine>上证 <span>+0.32%</span></QuoteLine>
        </Quote>
        <Pager><Dot /><Dot $on /></Pager>
      </BottomBar>

      <Annotations />
    </Page>
  );
}
